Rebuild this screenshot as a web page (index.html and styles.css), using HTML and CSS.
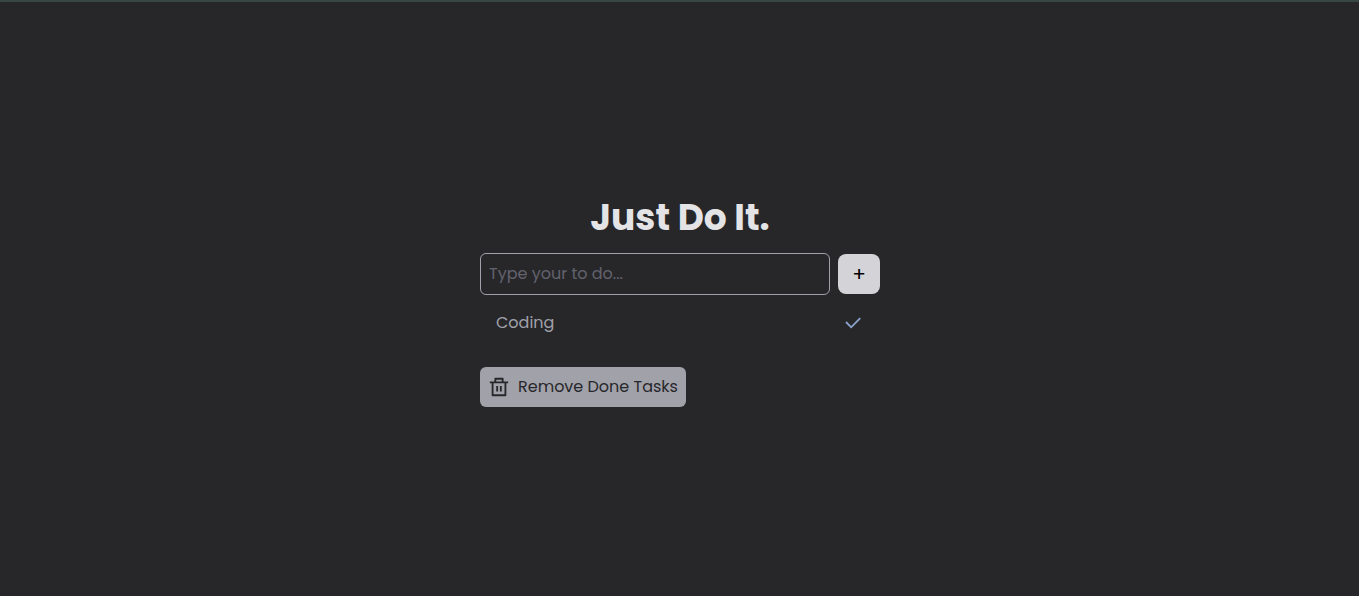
FILE: index.html
```html
<!DOCTYPE html>
<html lang="en">
<head>
<meta charset="utf-8">
<meta name="viewport" content="width=device-width, initial-scale=1">
<title>Just Do It.</title>
<link rel="stylesheet" href="styles.css">
</head>
<body>
<main class="todo">
  <h1 class="title">Just Do It.</h1>
  <form class="entry">
    <input class="entry-input" type="text" placeholder="Type your to do..." aria-label="New task">
    <button class="entry-add" type="submit">+</button>
  </form>
  <ul class="tasks">
    <li class="task">
      <span>Coding</span>
      <button class="task-done" type="button" aria-label="Mark Coding as done">
        <svg width="22" height="22" viewBox="0 0 24 24" fill="currentColor" aria-hidden="true"><path d="M10 15.17 19.19 5.98l1.42 1.41L10 18 3.64 11.64l1.41-1.42z"/></svg>
      </button>
    </li>
  </ul>
  <button class="remove" type="button">
    <svg width="22" height="22" viewBox="0 0 24 24" fill="currentColor" aria-hidden="true"><path d="M17 6h5v2h-2v13a1 1 0 0 1-1 1H5a1 1 0 0 1-1-1V8H2V6h5V3a1 1 0 0 1 1-1h8a1 1 0 0 1 1 1zm1 2H6v12h12zM9 11h2v6H9zm4 0h2v6h-2zM9 4v2h6V4z"/></svg>
    <span>Remove Done Tasks</span>
  </button>
</main>
</body>
</html>
```
FILE: styles.css
```css
* {
  box-sizing: border-box;
}

body {
  margin: 0;
  min-height: 100vh;
  display: flex;
  align-items: center;
  justify-content: center;
  padding: 0 16px 2px 17px;
  background: #27272a;
  border-top: 2px solid #364641;
  color: #a1a1aa;
  font: 16px/24px Poppins, Inter, sans-serif;
}

button,
input {
  font: inherit;
}

button {
  border: 0;
  cursor: pointer;
}

.todo {
  width: 100%;
  max-width: 400px;
}

.title {
  margin: 0 0 6px;
  color: #e4e4e7;
  font-size: 36px;
  line-height: 58px;
  font-weight: 700;
  text-align: center;
}

.entry {
  display: flex;
  align-items: center;
  gap: 8px;
}

.entry-input {
  flex: 1;
  min-width: 0;
  height: 42px;
  padding: 7px 8px 9px;
  border: 1px solid #a1a1aa;
  border-radius: 6px;
  background: transparent;
  color: #e4e4e7;
}

.entry-input::placeholder {
  color: #62626d;
  opacity: 1;
}

.entry-add {
  display: grid;
  place-items: center;
  width: 42px;
  height: 40px;
  padding: 0;
  border-radius: 8px;
  background: #d4d4d8;
  color: #000;
  font-size: 20px;
}

.tasks {
  margin: 8px 0 24px;
  padding: 0;
  list-style: none;
}

.task {
  display: flex;
  align-items: center;
  justify-content: space-between;
  padding: 8px 16px;
}

.task-done {
  display: grid;
  place-items: center;
  padding: 0;
  background: transparent;
  color: #8ba3cc;
}

.remove {
  display: flex;
  align-items: center;
  gap: 8px;
  height: 40px;
  padding: 8px;
  border-radius: 6px;
  background: #a1a1aa;
  color: #27272a;
}
```
